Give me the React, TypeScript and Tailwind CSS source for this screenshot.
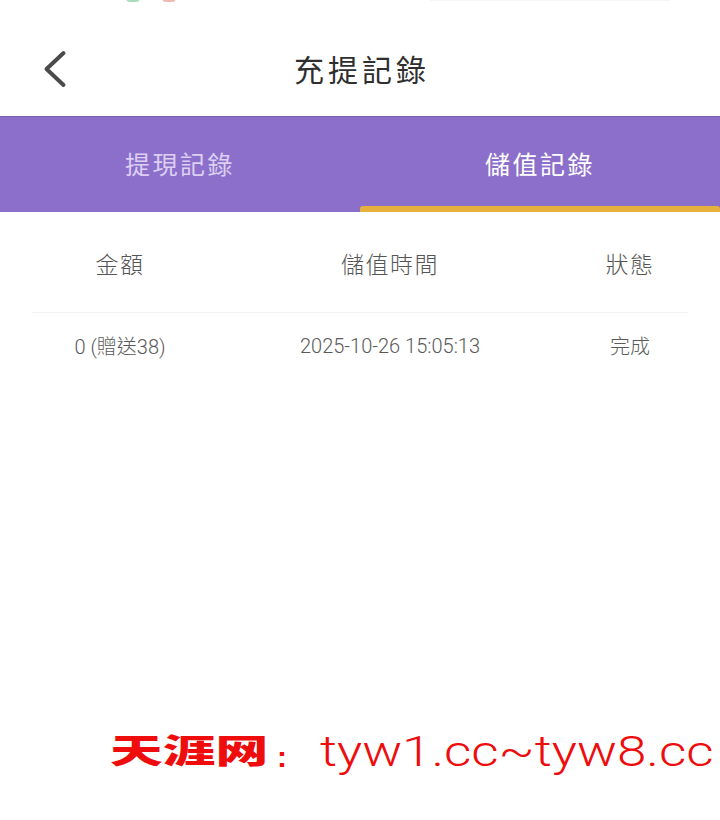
const cjk = "font-['Noto_Sans_CJK_TC','Noto_Sans_CJK_SC',sans-serif]";

function TopFragments() {
  return (
    <div className="absolute left-0 top-0 h-[3px] w-full overflow-hidden">
      <div className="absolute left-[126px] top-[-6px] h-[8px] w-[14px] rounded-full bg-[#a9dcbc]" />
      <div className="absolute left-[162px] top-[-6px] h-[8px] w-[14px] rounded-full bg-[#efb8b0]" />
      <div className="absolute left-[430px] top-0 h-[1px] w-[240px] bg-[#f6f6f6]" />
    </div>
  );
}

export default function App() {
  return (
    <div className={`relative h-[820px] w-[720px] overflow-hidden bg-white ${cjk}`}>
      <TopFragments />

      <header className="flex h-[116px] items-center px-[40px] pt-[22px]">
        <svg width="30" height="38" viewBox="0 0 30 38" fill="none" className="shrink-0">
          <path d="M23.5 3 L6.5 19 L23.5 35" stroke="#4a4a4a" strokeWidth="4" strokeLinecap="round" strokeLinejoin="round" />
        </svg>
        <h1 className="ml-[224px] -translate-y-[1px] text-[30px] leading-none font-normal tracking-[4px] whitespace-nowrap text-[#2f2f2f]">
          充提記錄
        </h1>
      </header>

      <nav className="grid h-[96px] grid-cols-2 bg-[#8c6fcb] shadow-[inset_0_1px_0_#7a62ad]">
        <div className="flex items-center justify-center text-[25px] font-normal tracking-[2.5px] text-[#dccff2]">
          提現記錄
        </div>
        <div className="relative flex items-center justify-center text-[25px] font-normal tracking-[2.5px] text-white">
          儲值記錄
          <div className="absolute inset-x-0 bottom-0 h-[6px] rounded-t-[3px] bg-[#e5b13a]" />
        </div>
      </nav>

      <section className="px-[32px] text-[#555555]">
        <div className="grid h-[101px] grid-cols-[176px_364px_116px] items-center border-b border-[#f2f2f2] pt-[2px] text-center text-[23px] font-light tracking-[1.5px]">
          <div>金額</div>
          <div>儲值時間</div>
          <div>狀態</div>
        </div>
        <div className="grid h-[66px] grid-cols-[176px_364px_116px] items-center text-center text-[20px] font-light text-[#5a5a5a]">
          <div className="whitespace-nowrap">
            <span className="font-['Roboto',sans-serif] font-light">0 (</span>贈送<span className="font-['Roboto',sans-serif] font-light">38)</span>
          </div>
          <div className="font-['Roboto',sans-serif] font-light whitespace-nowrap">2025-10-26 15:05:13</div>
          <div>完成</div>
        </div>
      </section>

      <div className="absolute left-[110px] top-[724px] flex h-[50px] items-center whitespace-nowrap text-[#ee0c0c]">
        <span className="inline-block w-[99px] origin-left scale-x-[1.6] text-[33px] leading-none font-black">天涯网</span>
        <span className="ml-[68px] w-[10px] translate-y-[8px] font-['Liberation_Sans',sans-serif] text-[30px] font-bold leading-none">:</span>
        <span className="ml-[33px] inline-block origin-left translate-y-[2px] scale-x-[1.23] font-['Roboto',sans-serif] text-[43px] leading-none font-light">tyw1.cc~tyw8.cc</span>
      </div>
    </div>
  );
}
